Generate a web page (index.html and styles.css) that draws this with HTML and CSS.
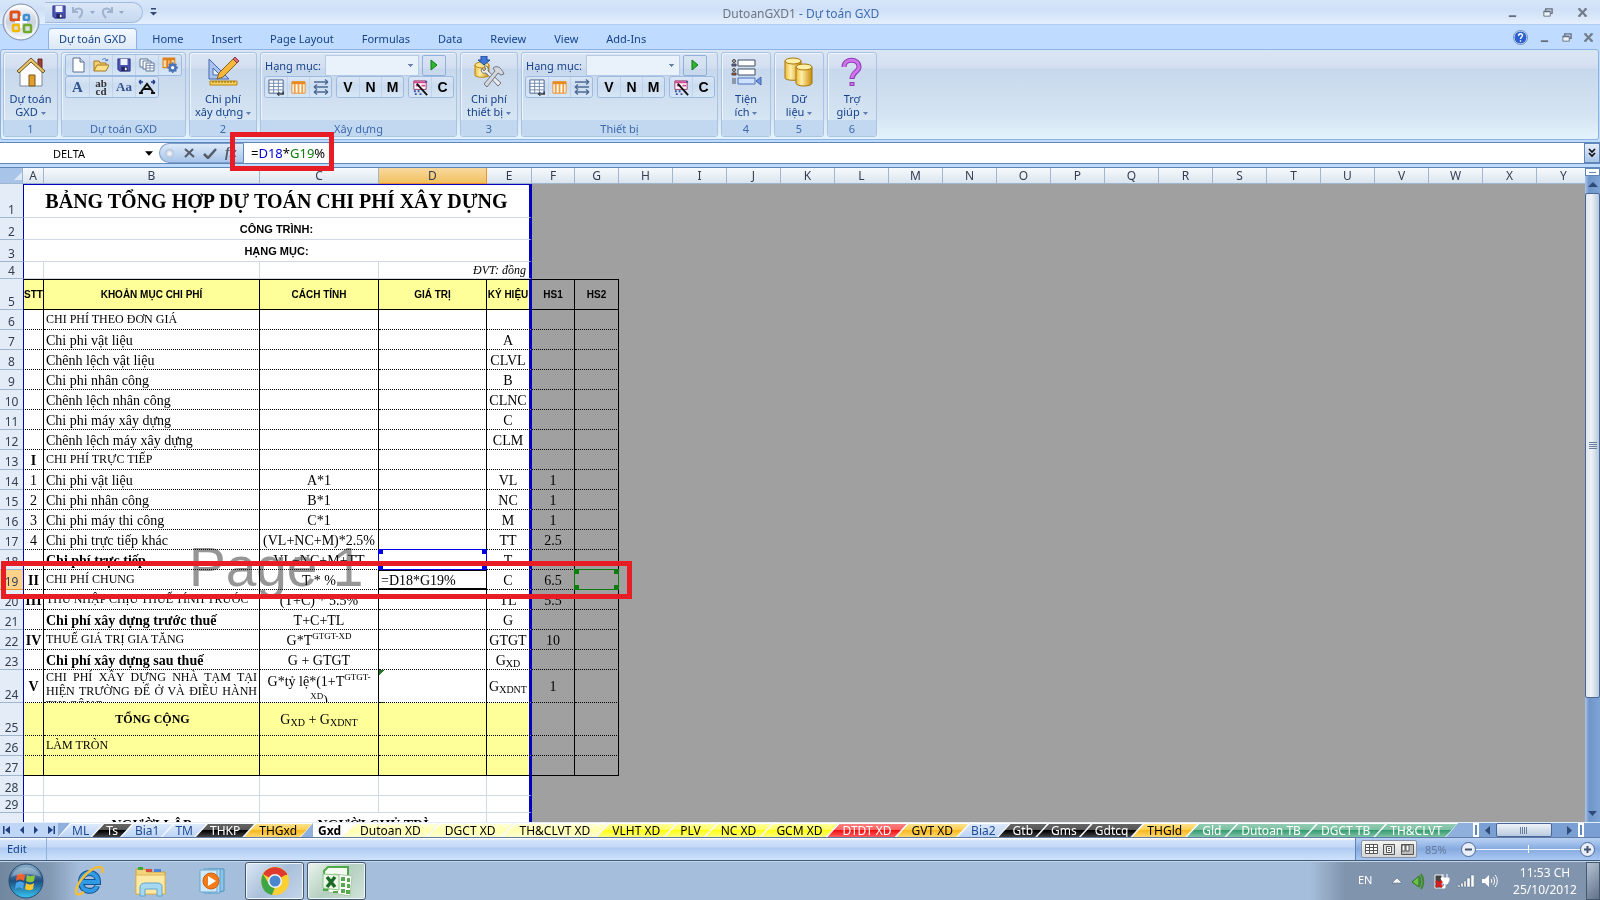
FILE: index.html
```
<!DOCTYPE html>
<html lang="vi">
<head>
    <meta charset="UTF-8">
    <meta name="viewport" content="width=device-width, initial-scale=1.0">
    <title>DutoanGXD1 - Dự toán GXD</title>
    <link rel="stylesheet" href="styles.css">
</head>
<body>
    <svg class="defs" aria-hidden="true">
        <defs>
            <linearGradient id="gold" x1="0" x2="1"><stop offset="0" stop-color="#f0b93a"/><stop offset=".35" stop-color="#fff0a8"/><stop offset="1" stop-color="#c98a08"/></linearGradient>
            <linearGradient id="orb" x1="0" y1="0" x2="0" y2="1"><stop offset="0" stop-color="#8fb4d0"/><stop offset=".5" stop-color="#1f4f80"/><stop offset="1" stop-color="#35c6f4"/></linearGradient>
            <linearGradient id="ball" x1="0" y1="0" x2="0" y2="1"><stop offset="0" stop-color="#ffffff"/><stop offset=".5" stop-color="#c9d2de"/><stop offset="1" stop-color="#f4f8fc"/></linearGradient>
            <symbol id="save" viewBox="0 0 16 16"><path d="M1 1h14v14H3l-2-2z" fill="#4a55b5" stroke="#2a2f80"/><path d="M4 1h8v7H4z" fill="#eef3ff"/><path d="M5 10h7v5H5z" fill="#20245c"/><path d="M9 11h2v3H9z" fill="#fff"/></symbol>
            <symbol id="page" viewBox="0 0 16 16"><path d="M3 1h7l4 4v10H3z" fill="#fff" stroke="#5c6f92"/><path d="M10 1v4h4" fill="#c8d4ea" stroke="#5c6f92"/></symbol>
            <symbol id="open" viewBox="0 0 16 16"><path d="M1 14V4h5l1 2h6v3" fill="#f6d070" stroke="#a8781c"/><path d="M1 14l3-6h12l-3 6z" fill="#fbe08c" stroke="#a8781c"/><path d="M9 3c2-2 4-2 5 1m0 0l-2-1m2 1l1-2" fill="none" stroke="#4a78c0"/></symbol>
            <symbol id="sheets" viewBox="0 0 16 16"><g fill="#fff" stroke="#5f7496"><path d="M1 2h8v8H1z"/><path d="M4 4h8v8H4z"/><path d="M7 6h8v8H7z"/></g><path d="M7 8.500h8M7 11h8M11 7v7" stroke="#7f92b4"/></symbol>
            <symbol id="cfg" viewBox="0 0 16 16"><path d="M1 1h11v9H1z" fill="#fbd9a0" stroke="#e0801c"/><path d="M1 2h11M5 2v8M8 2v8" stroke="#e0801c" stroke-width="2"/><circle cx="10" cy="10" r="3" fill="#fff" stroke="#4a72b8" stroke-width="2"/><path d="M10 5v10M5 10h10M6.500 6.500l7 7M13.500 6.500l-7 7" stroke="#4a72b8" stroke-width="1.500"/><circle cx="10" cy="10" r="1.500" fill="#fff"/></symbol>
            <symbol id="grid" viewBox="0 0 18 18"><path d="M1 1h15v14H1z" fill="#fff" stroke="#44608c"/><path d="M1 4.500h15M1 8h15M1 11.500h15M6 1v14M11 1v14" stroke="#6f88ac"/><path d="M10 16h7M12 14l-2 2 2 2M16 13v3" fill="none" stroke="#111"/></symbol>
            <symbol id="cols" viewBox="0 0 16 16"><path d="M1 2h14v12H1z" fill="#fff" stroke="#e88a20"/><path d="M1 3h14" stroke="#e88a20" stroke-width="3"/><path d="M4 4v10M8 4v10M12 4v10" stroke="#f0a040" stroke-width="2"/></symbol>
            <symbol id="arrows" viewBox="0 0 18 18"><path d="M2 4h14M16 4l-3-2.500M16 4l-3 2.500M2 9h14M2 9l3-2.500M2 9l3 2.500M2 14h14M16 14l-3-2.500M16 14l-3 2.500M2 14l3-2.500M2 14l3 2.500" fill="none" stroke="#4d6a94" stroke-width="1.300"/></symbol>
            <symbol id="wand" viewBox="0 0 18 18"><path d="M2 2h13v9H2z" fill="#fff" stroke="#93376a"/><path d="M2 3.500h13M4 7h4M10 7h4" stroke="#d04a8c" stroke-width="2"/><path d="M5 5l11 12" stroke="#111" stroke-width="2"/><path d="M2 13h2M6 13h2M3 16h2M8 16h2M14 3h2" stroke="#3a4fa8" stroke-width="2"/></symbol>
            <symbol id="play" viewBox="0 0 10 12"><path d="M2 1l6 5-6 5z" fill="#2fb52f" stroke="#117a1d"/></symbol>
            <symbol id="drop" viewBox="0 0 7 4"><path d="M0 0h7L3.500 4z" fill="currentColor"/></symbol>
            <symbol id="min" viewBox="0 0 12 12"><path d="M2 9h8v2H2z" fill="#66707e"/></symbol>
            <symbol id="max" viewBox="0 0 12 12"><path d="M4 4V2h7v5H9" fill="none" stroke="#66707e" stroke-width="1.500"/><path d="M2 4.500h7V10H2z" fill="#eef4fb" stroke="#66707e"/><path d="M2 5h7" stroke="#66707e" stroke-width="1.500"/></symbol>
            <symbol id="close" viewBox="0 0 12 12"><path d="M2 2l8 8M10 2l-8 8" stroke="#727c8b" stroke-width="2.400"/><path d="M1 2h3M8 2h3M1 10h3M8 10h3" stroke="#727c8b"/></symbol>
        </defs>
    </svg>

    <header class="titlebar">
        <div class="quick">
            <button aria-label="Save"><svg width="14" height="14"><use href="#save"/></svg></button>
            <button aria-label="Undo"><svg width="14" height="14" viewBox="0 0 14 14"><path d="M3 6c3-4 9-3 8 2 0 2-1 3-3 5M2 2v5h5" fill="none" stroke="#9fb3cf" stroke-width="2"/></svg></button>
            <svg class="mini" width="5" height="3"><use href="#drop"/></svg>
            <button aria-label="Redo"><svg width="14" height="14" viewBox="0 0 14 14"><path d="M11 6C8 2 2 3 3 8c0 2 1 3 3 5M12 2v5H7" fill="none" stroke="#9fb3cf" stroke-width="2"/></svg></button>
            <svg class="mini" width="5" height="3"><use href="#drop"/></svg>
        </div>
        <button class="customize" aria-label="Customize"><svg width="7" height="8" viewBox="0 0 7 8"><path d="M1 0h5v1.500H1zM0 4h7L3.500 7.500z" fill="#31496e"/></svg></button>
        <div class="title"><span>DutoanGXD1</span> - Dự toán GXD</div>
        <div class="winbtns">
            <button aria-label="Minimize"><svg width="11" height="11"><use href="#min"/></svg></button>
            <button aria-label="Restore"><svg width="11" height="11"><use href="#max"/></svg></button>
            <button aria-label="Close"><svg width="11" height="11"><use href="#close"/></svg></button>
        </div>
    </header>
    <button class="office" aria-label="Office">
        <svg width="38" height="38" viewBox="0 0 38 38">
            <circle cx="19" cy="19" r="18" fill="url(#ball)" stroke="#7a8ba5"/>
            <circle cx="19" cy="19" r="16" fill="none" stroke="#fff" stroke-opacity=".8"/>
            <g fill="none" stroke-width="3">
                <rect x="9" y="9" width="8" height="8" rx="1" stroke="#e0501a"/>
                <rect x="22" y="12" width="5" height="5" rx="1" stroke="#3f8fd6" stroke-width="2.500"/>
                <rect x="11" y="22" width="6" height="6" rx="1" stroke="#f5b800" stroke-width="2.500"/>
                <rect x="22" y="22" width="7" height="7" rx="1" stroke="#6faa2c" stroke-width="2.500"/>
            </g>
            <path d="M19 13v12M13 19h12" stroke="#fff" stroke-width="2"/>
        </svg>
    </button>

    <nav class="tabs">
        <a class="active" href="#">Dự toán GXD</a>
        <a href="#">Home</a>
        <a href="#">Insert</a>
        <a href="#">Page Layout</a>
        <a href="#">Formulas</a>
        <a href="#">Data</a>
        <a href="#">Review</a>
        <a href="#">View</a>
        <a href="#">Add-Ins</a>
        <div class="winbtns small">
            <button aria-label="Help"><svg width="15" height="15" viewBox="0 0 15 15"><circle cx="7.500" cy="7.500" r="6.500" fill="#2c5fd0" stroke="#e8f1ff"/><circle cx="7.500" cy="7.500" r="7" fill="none" stroke="#4468a8" stroke-width=".7"/><path d="M5.500 6c0-3 4-3 4-.5C9.500 7 7.500 7 7.500 9M7.500 10.200v1.600" fill="none" stroke="#fff" stroke-width="1.400"/></svg></button>
            <button aria-label="Minimize window"><svg width="11" height="11"><use href="#min"/></svg></button>
            <button aria-label="Restore window"><svg width="11" height="11"><use href="#max"/></svg></button>
            <button aria-label="Close window"><svg width="11" height="11"><use href="#close"/></svg></button>
        </div>
    </nav>

    <section class="ribbon">
        <div class="group g1">
            <button class="big">
                <svg width="32" height="32" viewBox="0 0 32 32"><path d="M23 3h4v9l-4-4z" fill="#a04038" stroke="#6d2420"/><path d="M5 15L16 5l11 10v15H5z" fill="#fdfdfd" stroke="#7d8798"/><path d="M16 2L2 15l2 2L16 6l12 11 2-2z" fill="#e8c06a" stroke="#6d5728"/><path d="M14 19h6v11h-6z" fill="#e0a030" stroke="#7a5410"/></svg>
                <span>Dự toán<br>GXD <svg width="5" height="3"><use href="#drop"/></svg></span>
            </button>
            <h2>1</h2>
        </div>
        <div class="group g2">
            <div class="tools">
                <div class="btns">
                    <button aria-label="New"><svg width="16" height="16"><use href="#page"/></svg></button>
                    <button aria-label="Open"><svg width="16" height="16"><use href="#open"/></svg></button>
                    <button aria-label="Save file"><svg width="14" height="14"><use href="#save"/></svg></button>
                    <button aria-label="Sheets"><svg width="16" height="16"><use href="#sheets"/></svg></button>
                    <button aria-label="Options"><svg width="17" height="17"><use href="#cfg"/></svg></button>
                </div>
                <div class="btns">
                    <button class="serif">A</button>
                    <button class="abcd">ab<br>cd</button>
                    <button class="aa">Aa</button>
                    <button aria-label="Text width"><svg width="18" height="16" viewBox="0 0 18 16"><path d="M1 14h4M13 14h4M3 13l6-8 6 8M6 10h6" fill="none" stroke="#111" stroke-width="2"/><path d="M1 3h4M1 3l2-2M1 3l2 2M17 3h-4M17 3l-2-2M17 3l-2 2" fill="none" stroke="#1c3f8c" stroke-width="1.500"/></svg></button>
                </div>
            </div>
            <h2>Dự toán GXD</h2>
        </div>
        <div class="group g3">
            <button class="big">
                <svg width="32" height="32" viewBox="0 0 32 32"><path d="M2 3v20h20z" fill="#a9c2ee" stroke="#4466ac"/><path d="M6 12v7h7z" fill="#e6eefb" stroke="#4466ac"/><path d="M10 23L12 17 26 3l4 4-14 14z" fill="#f5b83c" stroke="#8a6218"/><path d="M26 3l2-2 4 4-2 2z" fill="#e06a70" stroke="#8a4050"/><path d="M3 25h27v4H3z" fill="#f9d35a" stroke="#b88410"/><path d="M6 25v2M9 25v2M12 25v2M15 25v2M18 25v2M21 25v2M24 25v2M27 25v2" stroke="#8a6218"/></svg>
                <span>Chi phí<br>xây dựng <svg width="5" height="3"><use href="#drop"/></svg></span>
            </button>
            <h2>2</h2>
        </div>
        <div class="group g4">
            <div class="tools">
                <div class="pick">
                    <label for="hm1">Hạng mục:</label>
                    <select id="hm1"><option></option></select>
                    <button class="run" aria-label="Run"><svg width="10" height="12"><use href="#play"/></svg></button>
                </div>
                <div class="sets">
                    <div class="btns">
                        <button aria-label="Table"><svg width="17" height="17"><use href="#grid"/></svg></button>
                        <button aria-label="Columns"><svg width="15" height="15"><use href="#cols"/></svg></button>
                        <button aria-label="Swap"><svg width="18" height="18"><use href="#arrows"/></svg></button>
                    </div>
                    <div class="btns"><button class="letter">V</button><button class="letter">N</button><button class="letter">M</button></div>
                    <div class="btns"><button aria-label="Wizard"><svg width="17" height="17"><use href="#wand"/></svg></button><button class="letter">C</button></div>
                </div>
            </div>
            <h2>Xây dựng</h2>
        </div>
        <div class="group g5">
            <button class="big">
                <svg width="32" height="32" viewBox="0 0 32 32"><path d="M2 9v10c0 3 14 3 14 0V9z" fill="url(#gold)" stroke="#b8860b"/><ellipse cx="9" cy="9" rx="7" ry="3" fill="#fbe48c" stroke="#b8860b"/><path d="M8 0h6v4h3l-6 5-6-5h3z" fill="#3f78d8" stroke="#1f4a9c"/><path d="M9 12c-2 3 0 6 4 5l12 13 3-3-13-12c1-4-2-6-4-5l2 3-2 2z" fill="#e8eaee" stroke="#70757e"/><path d="M11 28l11-13-2-3c4-3 8-1 11 6l-3 1-3-2L14 31z" fill="#d4d8de" stroke="#70757e"/></svg>
                <span>Chi phí<br>thiết bị <svg width="5" height="3"><use href="#drop"/></svg></span>
            </button>
            <h2>3</h2>
        </div>
        <div class="group g6">
            <div class="tools">
                <div class="pick">
                    <label for="hm2">Hạng mục:</label>
                    <select id="hm2"><option></option></select>
                    <button class="run" aria-label="Run"><svg width="10" height="12"><use href="#play"/></svg></button>
                </div>
                <div class="sets">
                    <div class="btns">
                        <button aria-label="Table"><svg width="17" height="17"><use href="#grid"/></svg></button>
                        <button aria-label="Columns"><svg width="15" height="15"><use href="#cols"/></svg></button>
                        <button aria-label="Swap"><svg width="18" height="18"><use href="#arrows"/></svg></button>
                    </div>
                    <div class="btns"><button class="letter">V</button><button class="letter">N</button><button class="letter">M</button></div>
                    <div class="btns"><button aria-label="Wizard"><svg width="17" height="17"><use href="#wand"/></svg></button><button class="letter">C</button></div>
                </div>
            </div>
            <h2>Thiết bị</h2>
        </div>
        <div class="group g7">
            <button class="big">
                <svg width="32" height="32" viewBox="0 0 32 32"><g fill="#fff" stroke="#3c4c66"><path d="M8 4h17v6H8zM8 13h17v6H8z"/><path d="M8 22h17v6H8z" fill="#cfe0ff" stroke="#4a72c0"/></g><g stroke="#444"><circle cx="4" cy="5" r="1.500" fill="#bbb"/><path d="M2 8h4v2H2z" fill="#5570c0"/><circle cx="4" cy="14" r="1.500" fill="#bbb"/><path d="M2 17h4v2H2z" fill="#d05020"/></g><path d="M2 22h4v6H2z" fill="#8a96ac"/><path d="M31 21v8l-5-4z" fill="#6f97e0" stroke="#3f62b0"/></svg>
                <span>Tiện<br>ích <svg width="5" height="3"><use href="#drop"/></svg></span>
            </button>
            <h2>4</h2>
        </div>
        <div class="group g7">
            <button class="big">
                <svg width="32" height="32" viewBox="0 0 32 32"><g stroke="#a8740c"><path d="M2 5v17c0 3 16 3 16 0V5z" fill="url(#gold)"/><ellipse cx="10" cy="5" rx="8" ry="3" fill="#fff0a8"/><path d="M13 11v16c0 4 16 4 16 0V11z" fill="url(#gold)"/><ellipse cx="21" cy="11" rx="8" ry="3" fill="#fff0a8"/></g></svg>
                <span>Dữ<br>liệu <svg width="5" height="3"><use href="#drop"/></svg></span>
            </button>
            <h2>5</h2>
        </div>
        <div class="group g7">
            <button class="big">
                <svg width="32" height="32" viewBox="0 0 32 32"><g fill="none"><path d="M8 11c0-9 15-9 15 0 0 5-7 5-7 12M16 26v4" stroke="#8f3fb0" stroke-width="5"/><path d="M8 11c0-9 15-9 15 0 0 5-7 5-7 11M16 27v2" stroke="#cf74ee" stroke-width="3"/></g></svg>
                <span>Trợ<br>giúp <svg width="5" height="3"><use href="#drop"/></svg></span>
            </button>
            <h2>6</h2>
        </div>
    </section>

    <section class="formula">
        <input class="name" aria-label="Name box" value="DELTA">
        <button class="namedrop" aria-label="Names"><svg width="8" height="5"><use href="#drop"/></svg></button>
        <div class="capsule">
            <i></i>
            <button aria-label="Cancel"><svg width="11" height="10" viewBox="0 0 11 10"><path d="M1 1l9 8M9 1L1 9" stroke="#555b66" stroke-width="2"/></svg></button>
            <button aria-label="Enter"><svg width="14" height="11" viewBox="0 0 14 11"><path d="M1 6l4 4 8-9" fill="none" stroke="#555b66" stroke-width="2.500"/></svg></button>
            <button class="fx">fx</button>
        </div>
        <div class="entry" contenteditable="true" role="textbox" aria-label="Formula" spellcheck="false">=<span class="blue">D18</span>*<span class="green">G19</span>%</div>
        <button class="expand" aria-label="Expand"><svg width="8" height="10" viewBox="0 0 8 10"><path d="M1 1l3 3 3-3M1 5l3 3 3-3" fill="none" stroke="#111" stroke-width="1.700"/></svg></button>
    </section>

    <main class="work">
        <div class="sheet">
            <table>
                <colgroup>
                    <col class="c0"><col class="ca"><col class="cb"><col class="cc"><col class="cd"><col class="ce"><col class="cf"><col class="cg"><col class="cx" span="18">
                </colgroup>
                <thead>
                    <tr>
                        <th class="corner"><svg width="8" height="8" viewBox="0 0 8 8"><path d="M8 0v8H0z" fill="#dbe8f8"/></svg></th>
                        <th>A</th><th>B</th><th>C</th><th class="hot">D</th><th>E</th><th>F</th><th>G</th><th>H</th><th>I</th><th>J</th><th>K</th><th>L</th><th>M</th><th>N</th><th>O</th><th>P</th><th>Q</th><th>R</th><th>S</th><th>T</th><th>U</th><th>V</th><th>W</th><th>X</th><th>Y</th>
                    </tr>
                </thead>
                <tbody class="top">
                    <tr class="r1"><th>1</th><td colspan="5" class="e heading">BẢNG TỔNG HỢP DỰ TOÁN CHI PHÍ XÂY DỰNG</td></tr>
                    <tr class="r2"><th>2</th><td colspan="5" class="e sub">CÔNG TRÌNH:</td></tr>
                    <tr class="r2"><th>3</th><td colspan="5" class="e sub">HẠNG MỤC:</td></tr>
                    <tr class="r4"><th>4</th><td></td><td></td><td></td><td colspan="2" class="e unit">ĐVT: đồng</td></tr>
                </tbody>
                <tbody class="data">
                    <tr class="heads"><th>5</th><td>STT</td><td>KHOẢN MỤC CHI PHÍ</td><td>CÁCH TÍNH</td><td>GIÁ TRỊ</td><td class="e">KÝ HIỆU</td><td>HS1</td><td>HS2</td></tr>
                    <tr><th>6</th><td></td><td class="caps">CHI PHÍ THEO ĐƠN GIÁ</td><td></td><td></td><td></td><td></td><td></td></tr>
                    <tr><th>7</th><td></td><td>Chi phi vật liệu</td><td></td><td></td><td>A</td><td></td><td></td></tr>
                    <tr><th>8</th><td></td><td>Chênh lệch vật liệu</td><td></td><td></td><td>CLVL</td><td></td><td></td></tr>
                    <tr><th>9</th><td></td><td>Chi phi nhân công</td><td></td><td></td><td>B</td><td></td><td></td></tr>
                    <tr><th>10</th><td></td><td>Chênh lệch nhân công</td><td></td><td></td><td>CLNC</td><td></td><td></td></tr>
                    <tr><th>11</th><td></td><td>Chi phi máy xây dựng</td><td></td><td></td><td>C</td><td></td><td></td></tr>
                    <tr><th>12</th><td></td><td>Chênh lệch máy xây dựng</td><td></td><td></td><td>CLM</td><td></td><td></td></tr>
                    <tr><th>13</th><td class="b">I</td><td class="caps">CHI PHÍ TRỰC TIẾP</td><td></td><td></td><td></td><td></td><td></td></tr>
                    <tr><th>14</th><td>1</td><td>Chi phi vật liệu</td><td>A*1</td><td></td><td>VL</td><td>1</td><td></td></tr>
                    <tr><th>15</th><td>2</td><td>Chi phi nhân công</td><td>B*1</td><td></td><td>NC</td><td>1</td><td></td></tr>
                    <tr><th>16</th><td>3</td><td>Chi phi máy thi công</td><td>C*1</td><td></td><td>M</td><td>1</td><td></td></tr>
                    <tr><th>17</th><td>4</td><td>Chi phi trực tiếp khác</td><td>(VL+NC+M)*2.5%</td><td></td><td>TT</td><td>2.5</td><td></td></tr>
                    <tr><th>18</th><td></td><td class="b">Chi phí trực tiếp</td><td>VL+NC+M+TT</td><td class="ref"><i></i></td><td>T</td><td></td><td></td></tr>
                    <tr><th class="hot">19</th><td class="b">II</td><td class="caps">CHI PHÍ CHUNG</td><td>T * %</td><td class="editing">=D18*G19%</td><td>C</td><td>6.5</td><td class="ref greenref"><i></i></td></tr>
                    <tr><th>20</th><td class="b">III</td><td class="caps">THU NHẬP CHỊU THUẾ TÍNH TRƯỚC</td><td>(T+C) * 5.5%</td><td></td><td>TL</td><td>5.5</td><td></td></tr>
                    <tr><th>21</th><td></td><td class="b">Chi phí xây dựng trước thuế</td><td>T+C+TL</td><td></td><td>G</td><td></td><td></td></tr>
                    <tr><th>22</th><td class="b">IV</td><td class="caps">THUẾ GIÁ TRỊ GIA TĂNG</td><td>G*T<sup>GTGT-XD</sup></td><td></td><td>GTGT</td><td>10</td><td></td></tr>
                    <tr><th>23</th><td></td><td class="b">Chi phí xây dựng sau thuế</td><td>G + GTGT</td><td></td><td>G<sub>XD</sub></td><td></td><td></td></tr>
                    <tr class="tall"><th>24</th><td class="b">V</td><td class="long"><div>CHI PHÍ XÂY DỰNG NHÀ TẠM TẠI HIỆN TRƯỜNG ĐỂ Ở VÀ ĐIỀU HÀNH THI CÔNG</div></td><td class="wrap"><div>G*tỷ lệ*(1+T<sup>GTGT-XD</sup>)</div></td><td class="flag"></td><td>G<sub>XDNT</sub></td><td>1</td><td></td></tr>
                    <tr class="tall sum"><th>25</th><td></td><td class="b mid">TỔNG CỘNG</td><td>G<sub>XD</sub> + G<sub>XDNT</sub></td><td></td><td></td><td></td><td></td></tr>
                    <tr class="sum"><th>26</th><td></td><td class="caps">LÀM TRÒN</td><td></td><td></td><td></td><td></td><td></td></tr>
                    <tr class="sum last"><th>27</th><td></td><td></td><td></td><td></td><td></td><td></td><td></td></tr>
                </tbody>
                <tbody class="top">
                    <tr class="r28"><th>28</th><td></td><td></td><td></td><td></td><td class="e"></td></tr>
                    <tr class="r4"><th>29</th><td></td><td></td><td></td><td></td><td class="e"></td></tr>
                    <tr class="sign"><th></th><td></td><td>NGƯỜI LẬP</td><td colspan="2">NGƯỜI CHỦ TRÌ</td><td class="e"></td></tr>
                </tbody>
            </table>
            <div class="watermark">Page 1</div>
        </div>
        <div class="vscroll">
            <span class="split"></span>
            <button aria-label="Scroll up"><svg width="10" height="5" viewBox="0 0 10 5"><path d="M0 5h10L5 0z" fill="#2f4a78"/></svg></button>
            <div class="thumb"></div>
            <button class="down" aria-label="Scroll down"><svg width="9" height="5"><use href="#drop"/></svg></button>
        </div>
    </main>

    <footer class="sheetbar">
        <div class="nav">
            <button aria-label="First"><svg width="8" height="8" viewBox="0 0 8 8"><path d="M0 0h1.500v8H0zM7 0v8L2 4z" fill="#1f3f80"/></svg></button>
            <button aria-label="Previous"><svg width="8" height="8" viewBox="0 0 8 8"><path d="M6 0v8L2 4z" fill="#1f3f80"/></svg></button>
            <button aria-label="Next"><svg width="8" height="8" viewBox="0 0 8 8"><path d="M2 0v8l4-4z" fill="#1f3f80"/></svg></button>
            <button aria-label="Last"><svg width="8" height="8" viewBox="0 0 8 8"><path d="M6.500 0H8v8H6.500zM1 0v8l5-4z" fill="#1f3f80"/></svg></button>
        </div>
        <div class="sheets">
            <a class="plain" href="#"><span>ML</span></a>
            <a class="black" href="#"><span>Ts</span></a>
            <a class="plain" href="#"><span>Bia1</span></a>
            <a class="plain" href="#"><span>TM</span></a>
            <a class="black" href="#"><span>THKP</span></a>
            <a class="orange" href="#"><span>THGxd</span></a>
            <a class="current" href="#"><span>Gxd</span></a>
            <a class="cream" href="#"><span>Dutoan XD</span></a>
            <a class="cream" href="#"><span>DGCT XD</span></a>
            <a class="cream" href="#"><span>TH&amp;CLVT XD</span></a>
            <a class="yellow" href="#"><span>VLHT XD</span></a>
            <a class="yellow" href="#"><span>PLV</span></a>
            <a class="yellow" href="#"><span>NC XD</span></a>
            <a class="yellow" href="#"><span>GCM XD</span></a>
            <a class="red" href="#"><span>DTDT XD</span></a>
            <a class="orange" href="#"><span>GVT XD</span></a>
            <a class="plain" href="#"><span>Bia2</span></a>
            <a class="black" href="#"><span>Gtb</span></a>
            <a class="black" href="#"><span>Gms</span></a>
            <a class="black" href="#"><span>Gdtcq</span></a>
            <a class="orange" href="#"><span>THGld</span></a>
            <a class="teal" href="#"><span>Gld</span></a>
            <a class="teal" href="#"><span>Dutoan TB</span></a>
            <a class="teal" href="#"><span>DGCT TB</span></a>
            <a class="teal" href="#"><span>TH&amp;CLVT</span></a>
        </div>
        <div class="hscroll">
            <span class="grip"></span>
            <button aria-label="Scroll left"><svg width="5" height="9" viewBox="0 0 5 9"><path d="M5 0v9L0 4.500z" fill="#2f4a78"/></svg></button>
            <div class="thumb"></div>
            <button aria-label="Scroll right"><svg width="5" height="9" viewBox="0 0 5 9"><path d="M0 0v9l5-4.500z" fill="#2f4a78"/></svg></button>
            <span class="grip"></span>
        </div>
    </footer>

    <div class="status">
        <span class="mode">Edit</span>
        <div class="zoom">
            <div class="views">
                <button aria-label="Normal"><svg width="13" height="10" viewBox="0 0 13 10"><path d="M.5.5h12v9H.5zM.5 3.500h12M.5 6.500h12M4.500.5v9M8.500.5v9" fill="#fff" stroke="#555"/></svg></button>
                <button aria-label="Page layout"><svg width="12" height="11" viewBox="0 0 12 11"><path d="M.5.5h11v10H.5z" fill="#ddd" stroke="#555"/><path d="M3.500 2.500h5v6h-5z" fill="#fff" stroke="#555"/><path d="M5 4.500h2M5 6.500h2" stroke="#555"/></svg></button>
                <button aria-label="Page break"><svg width="13" height="11" viewBox="0 0 13 11"><path d="M.5.5h12v10H.5z" fill="#bbb" stroke="#555"/><path d="M1 1h3v6H1zM5 1h3v6H5z" fill="#fff" stroke="#555"/></svg></button>
            </div>
            <span class="pct">85%</span>
            <button class="round" aria-label="Zoom out"><svg width="15" height="15" viewBox="0 0 15 15"><circle cx="7.500" cy="7.500" r="7" fill="#e8effa" stroke="#4c6796"/><path d="M4 7.500h7" stroke="#44546e" stroke-width="2"/></svg></button>
            <span class="track"></span>
            <button class="round" aria-label="Zoom in"><svg width="15" height="15" viewBox="0 0 15 15"><circle cx="7.500" cy="7.500" r="7" fill="#e8effa" stroke="#4c6796"/><path d="M4 7.500h7M7.500 4v7" stroke="#44546e" stroke-width="2"/></svg></button>
        </div>
    </div>

    <div class="taskbar">
        <button class="start" aria-label="Start">
            <svg width="36" height="36" viewBox="0 0 36 36"><circle cx="18" cy="18" r="17" fill="url(#orb)" stroke="#2a4a6c"/><path d="M9 12c3-2 5-2 8 0l-1 6c-3-2-5-2-8 0z" fill="#f0602a"/><path d="M19 12c3 2 6 1 8 0l-1 6c-3 2-6 1-8 0z" fill="#8cc63c"/><path d="M8 20c3-2 5-2 8 0l-1 6c-3-2-5-2-8 0z" fill="#4aa4ea"/><path d="M18 20c3 2 5 2 8 0l-1 6c-3 2-6 1-8 0z" fill="#fcc82c"/><path d="M3 14C8 1 28 1 33 14c-8-4-22-4-30 0z" fill="#fff" opacity=".28"/></svg>
        </button>
        <button class="app" aria-label="Internet Explorer">
            <svg width="32" height="32" viewBox="0 0 32 32"><path d="M8 17h17c0-12-17-12-17 0 0 11 14 11 16 4" fill="none" stroke="#16508f" stroke-width="6"/><path d="M8 17h17c0-12-17-12-17 0 0 11 14 11 16 4" fill="none" stroke="#2f9be6" stroke-width="4"/><path d="M29 8c2-6-2-8-9-4C11 9 4 19 3 26c0 5 4 4 8 1" fill="none" stroke="#f2bd3a" stroke-width="2.500"/></svg>
        </button>
        <button class="app" aria-label="Explorer">
            <svg width="34" height="32" viewBox="0 0 34 32"><path d="M2 4h9l2 3h18v22H2z" fill="#f2d47c" stroke="#c8a040"/><path d="M4 2h5v3H4z" fill="#3aa83a"/><path d="M12 4h6v3h-6z" fill="#d84a3a"/><path d="M20 4h7v3h-7z" fill="#4a86d8"/><path d="M2 10h29v19H2z" fill="#fbe9a4" stroke="#dcb654"/><path d="M6 31v-9c0-3 3-4 5-4h12c3 0 5 1 5 4v9h-5v-7H11v7z" fill="#a6d8f2" stroke="#5fa6d0"/></svg>
        </button>
        <button class="app" aria-label="Media Player">
            <svg width="30" height="30" viewBox="0 0 30 30"><path d="M10 3h16v22l-16 2z" fill="#8cc4e8" stroke="#4f92c0"/><path d="M6 3h16v24H6z" fill="#b4dcf4" stroke="#5c9cc8"/><path d="M2 4h17v22H2z" fill="#cfe9f9" stroke="#6aa8d0"/><circle cx="13" cy="15" r="8" fill="#f27c1c" stroke="#d0600c"/><path d="M10 10v10l8-5z" fill="#fff"/></svg>
        </button>
        <button class="app open" aria-label="Chrome">
            <svg width="30" height="30" viewBox="0 0 30 30"><circle cx="15" cy="15" r="14" fill="#fbd034"/><path d="M15 15L3 8C8-1 22-1 27 8z" fill="#e0392e"/><path d="M3 8l6 10 6 3-3 8C2 27-1 16 3 8z" fill="#3fa648"/><path d="M15 8h12" stroke="#e0392e" stroke-width="2"/><circle cx="15" cy="15" r="7" fill="#f4f4f4"/><circle cx="15" cy="15" r="5.500" fill="#4a86d0"/></svg>
        </button>
        <button class="app open excel" aria-label="Excel">
            <svg width="34" height="32" viewBox="0 0 34 32"><path d="M8 2h20v23H4V6z" fill="#f4fbf0" stroke="#4fa84a" stroke-width="2"/><path d="M14 9l18 2-2 20-22-4z" fill="#fff" stroke="#a8c8a4"/><path d="M3 9l16 1v15L3 23z" fill="#eef8ea" stroke="#8cc484"/><path d="M21 12h4v4h-4zM27 13h3v4h-3zM21 18h4v4h-4zM27 19h3v4h-3zM13 26h5v2h-5zM21 24h4v4h-4zM26 25h4v4h-4z" fill="#58a850"/><path d="M7 12l8 10M15 12L7 22" stroke="#1c6a28" stroke-width="3.500"/></svg>
        </button>
        <div class="tray">
            <span class="lang">EN</span>
            <svg width="10" height="6" viewBox="0 0 10 6"><path d="M0 5l5-5 5 5z" fill="#fff" stroke="#44566e" stroke-width=".5"/></svg>
            <svg width="16" height="17" viewBox="0 0 16 17"><path d="M2 9l7-6v11z" fill="#6cc04c" stroke="#2c6e1c"/><path d="M9 3c2 3 2 8 0 11M11 1c3 5 3 11 0 15" fill="none" stroke="#3c8a28" stroke-width="2"/></svg>
            <svg width="16" height="16" viewBox="0 0 16 16"><path d="M1 2h7v13H1z" fill="#444" stroke="#eee"/><path d="M9 1v4M13 1v4M7 5h8v3l-2 3h-3l-2-3zM11 11v4H8" fill="#fff" stroke="#fff"/><path d="M2 8l6 6M8 8l-6 6" stroke="#e01a1a" stroke-width="2.500"/></svg>
            <svg width="16" height="14" viewBox="0 0 16 14"><path d="M0 11h2v2H0zM3 9h2v4H3zM6 7h2v6H6zM9 4h3v9H9zM13 1h3v12h-3z" fill="#fff" stroke="#4a5a70" stroke-width=".4"/></svg>
            <svg width="16" height="14" viewBox="0 0 16 14"><path d="M0 5v4h3l4 4V1L3 5z" fill="#fff"/><path d="M9 5c1 1 1 3 0 4M11 3c2 2 2 6 0 8M13 1c3 3 3 9 0 12" fill="none" stroke="#fff"/></svg>
            <div class="clock">11:53 CH<br>25/10/2012</div>
        </div>
        <button class="desktop" aria-label="Show desktop"></button>
    </div>

    <div class="mark mark-formula"></div>
    <div class="mark mark-row"></div>
</body>
</html>
```
FILE: styles.css
```
* {
    box-sizing: border-box;
}

html, body {
    height: 100%;
    margin: 0;
}

body {
    display: flex;
    flex-direction: column;
    position: relative;
    overflow: hidden;
    background-color: #bfdbff;
    font-family: "Noto Sans", "Open Sans", sans-serif;
    font-size: 11px;
    color: #15428b;
}

button {
    display: flex;
    align-items: center;
    justify-content: center;
    padding: 0;
    border: none;
    background: none;
    font: inherit;
    color: inherit;
}

a {
    color: inherit;
    text-decoration: none;
}

.defs {
    position: absolute;
    width: 0;
    height: 0;
}

/* title bar */
.titlebar {
    display: flex;
    align-items: center;
    height: 25px;
    padding-left: 45px;
    background: linear-gradient(#d8e6f9, #cfe0f7 40%, #e4effc);
    border-bottom: 1px solid #b0cdf0;
}

.quick {
    display: flex;
    align-items: center;
    gap: 5px;
    width: 98px;
    height: 21px;
    padding-left: 7px;
    background: linear-gradient(#dbe7f7, #c6d8f0);
    border: 1px solid #9fbce0;
    border-left: none;
    border-radius: 0 11px 11px 0;
}

.mini {
    color: #94a8c6;
}

.customize {
    width: 20px;
}

.title {
    flex: 1;
    padding: 2px 68px 0 0;
    text-align: center;
    color: #3f6db5;
    font-size: 12px;
}

.title span {
    color: #6e7480;
}

.winbtns {
    display: flex;
    gap: 24px;
    padding-right: 12px;
}

.winbtns.small {
    gap: 11px;
    margin-left: auto;
    padding: 0 6px 0 0;
}

.office {
    position: absolute;
    left: 2px;
    top: 3px;
    z-index: 3;
}

/* ribbon */
.tabs {
    display: flex;
    align-items: center;
    height: 24px;
    padding-left: 48px;
}

.tabs a {
    height: 24px;
    padding: 0 14px;
    line-height: 28px;
}

.tabs a.active {
    height: 22px;
    margin: 3px 1px 0 0;
    padding: 0 10px;
    line-height: 20px;
    background: linear-gradient(#f4f9ff, #dce8f6);
    border: 1px solid #8db2e3;
    border-bottom: none;
    border-radius: 4px 4px 0 0;
}

.ribbon {
    display: flex;
    gap: 3px;
    height: 91px;
    margin-right: 1px;
    padding: 2px;
    background: linear-gradient(#dbe6f4 0, #d3dff0 18px, #c7d8ed 19px, #d5e4f2 66px, #e3f3fd 100%);
    border: 1px solid #8db2e3;
    border-radius: 3px;
}

.group {
    display: flex;
    flex-direction: column;
    justify-content: space-between;
    border: 1px solid #a9c3e0;
    border-radius: 3px;
    box-shadow: inset 1px 1px 0 #edf4fc;
}

.group h2 {
    margin: 0;
    height: 16px;
    background-color: #c1d8f0;
    border-radius: 0 0 3px 3px;
    font-size: 11px;
    font-weight: normal;
    line-height: 17px;
    text-align: center;
    color: #3e6aaa;
}

.g1 { width: 55px; }
.g2 { width: 125px; }
.g3 { width: 68px; }
.g4, .g6 { width: 197px; }
.g5 { width: 58px; }
.g7 { width: 50px; }

.big {
    flex-direction: column;
    gap: 4px;
    padding-top: 3px;
    line-height: 13px;
    white-space: nowrap;
}

.big span svg {
    vertical-align: middle;
    color: #5f7cae;
}

.tools {
    padding: 1px 3px;
}

.btns {
    display: flex;
    width: fit-content;
    height: 22px;
    border: 1px solid #9dbbe0;
    border-radius: 3px;
    background: linear-gradient(#dae6f5, #cbdcf0 45%, #d8e7f6);
}

.btns button {
    width: 23px;
}

.btns button + button {
    border-left: 1px solid #c0d3ea;
}

.serif {
    font: bold 15px "Liberation Serif", serif;
    color: #33548f;
}

.btns .abcd {
    font: bold 11px/8px "Liberation Serif", serif;
    color: #333;
}

.aa {
    font: bold 13px "Liberation Serif", serif;
    color: #33548f;
}

.pick {
    display: flex;
    align-items: center;
    height: 22px;
}

.pick label {
    flex: 1;
    padding-left: 1px;
    white-space: nowrap;
}

.pick select {
    width: 94px;
    height: 21px;
    border: 1px solid #b4cae6;
    background: conic-gradient(from -45deg at 50% 100%, #6a83ab 90deg, transparent 0) no-repeat right 5px center / 6px 3px #e9f1fb;
    appearance: none;
}

.run {
    width: 24px;
    height: 21px;
    margin: 0 7px 0 3px;
    border: 1px solid #8fb0dc;
    border-radius: 2px;
}

.sets {
    display: flex;
    gap: 4px;
}

.g4 .btns button, .g6 .btns button {
    width: 22px;
}

.btns .letter {
    font: bold 14px "Liberation Sans", sans-serif;
    color: #000;
}

/* formula bar */
.formula {
    display: flex;
    height: 22px;
    margin: 2px 0 3px;
    background-color: #fff;
    border-top: 1px solid #5f86b8;
    border-bottom: 1px solid #5f86b8;
    color: #000;
}

.name {
    width: 138px;
    padding: 0;
    border: none;
    background: none;
    font: 11px "Noto Sans", sans-serif;
    text-align: center;
}

.namedrop {
    width: 21px;
    color: #000;
}

.capsule {
    display: flex;
    align-items: center;
    gap: 8px;
    width: 85px;
    padding-left: 5px;
    background: linear-gradient(#dce9f8, #a9c5ea);
    border: 1px solid #7d9fcc;
    border-right: 1px solid #5f86b8;
    border-radius: 11px 0 0 11px;
}

.capsule i {
    width: 9px;
    height: 9px;
    margin-right: 2px;
    border-radius: 50%;
    background: radial-gradient(#fff, #8ea8cc);
}

.fx {
    font: italic bold 14px "Liberation Serif", serif;
    color: #555b66;
}

.entry {
    flex: 1;
    padding-left: 7px;
    font-size: 13px;
    line-height: 20px;
}

.blue { color: #0000d8; }
.green { color: #0a7d0a; }

.expand {
    width: 16px;
    border: 1px solid #5f86b8;
    background: linear-gradient(#e4eefa, #a9c4e8);
}

/* worksheet */
.work {
    display: flex;
    flex: 1;
    min-height: 0;
    border-top: 1px solid #5f86b8;
}

.sheet {
    flex: 1;
    position: relative;
    overflow: hidden;
    background-color: #a0a0a0;
}

.sheet table {
    table-layout: fixed;
    width: 1591px;
    border-spacing: 0;
    color: #000;
    font-family: "Liberation Serif", serif;
    font-size: 14px;
}

.c0 { width: 23px; }
.ca { width: 21px; }
.cb { width: 216px; }
.cc { width: 119px; }
.cd { width: 108px; }
.ce { width: 45px; }
.cf { width: 43px; }
.cg { width: 44px; }
.cx { width: 54px; }

.sheet th {
    padding: 0;
    font: 12px/15px "Noto Sans", sans-serif;
    color: #333f50;
}

thead th {
    height: 16px;
    background: linear-gradient(#f7fafd, #dbe4ee);
    border-right: 1px solid #9eb6ce;
    border-bottom: 1px solid #9eb6ce;
}

thead th.corner {
    background-color: #a9c4e9;
    background-image: none;
    text-align: right;
}

thead th.hot {
    background: linear-gradient(#f9d99f, #f1c15f);
    border-color: #e8952f;
}

tbody th {
    background-color: #e4ecf7;
    border-bottom: 1px solid #9eb6ce;
    vertical-align: bottom;
}

tbody th.hot {
    background-color: #fdd38c;
    border-color: #e8952f;
}

td {
    padding: 2px 0 0;
    height: 20px;
    line-height: 17px;
    background-color: #fff;
    text-align: center;
    white-space: nowrap;
}

td:nth-child(2) {
    border-left: 1px solid #0000c0;
}

.top td {
    border-right: 1px solid #d0d7e5;
    border-bottom: 1px solid #d0d7e5;
}

.r1 td { height: 34px; border-top: 1px solid #0000c0; }
.r2 td { height: 22px; }
.r4 td { height: 17px; padding-top: 0; line-height: 16px; }
.sheet .r4 th { line-height: 14px; }

.top .heading {
    padding-top: 0;
    font-size: 20px;
    font-weight: bold;
}

.top .sub {
    padding-top: 0;
    font: bold 11px "Liberation Sans", sans-serif;
}

.unit {
    padding-right: 3px;
    font-size: 12px;
    font-style: italic;
    text-align: right;
}

.data td {
    border-right: 1px solid #000;
    border-bottom: 1px dotted #000;
}

.data td:nth-child(3) {
    padding-left: 2px;
    text-align: left;
}

.data td:nth-child(n+7) {
    background-color: #a0a0a0;
}

.top td.e, .data td:nth-child(6) {
    border-right: 3px solid #0000c0;
}

.data .heads td {
    height: 31px;
    padding: 0;
    background-color: #ffff99;
    border-top: 1px solid #000;
    border-bottom: 1px solid #000;
    font: bold 10px "Liberation Sans", sans-serif;
    text-align: center;
}

.data .heads td:nth-child(n+7) {
    background-color: #a0a0a0;
}

.data .sum td:nth-child(-n+6) {
    background-color: #ffff99;
}

.data .last td {
    border-bottom: 1px solid #000;
}

.data .caps {
    padding-top: 0;
    font-size: 12px;
}

.b {
    font-weight: bold;
}

.data .tall td {
    height: 33px;
    padding-top: 0;
}

.data .tall td.mid {
    font-size: 12px;
    text-align: center;
}

.long div {
    height: 32px;
    padding-right: 2px;
    overflow: hidden;
    font-size: 12px;
    line-height: 14px;
    text-align: justify;
    white-space: normal;
}

.wrap div {
    height: 32px;
    padding-top: 2px;
    overflow: hidden;
    line-height: 19px;
    white-space: normal;
}

sup, sub {
    line-height: 0;
}

sup {
    font-size: 9px;
}

sub {
    font-size: 10px;
    vertical-align: -2px;
}

.flag {
    background-image: linear-gradient(135deg, #1f7a1f 4px, transparent 4px);
}

.ref, .editing {
    position: relative;
}

/* coloured range frame with a handle in each corner */
.ref i {
    position: absolute;
    inset: -1px;
    z-index: 1;
    color: #0000e0;
    border: 1px solid currentColor;
    background:
        linear-gradient(currentColor, currentColor) 0 0 / 4px 4px,
        linear-gradient(currentColor, currentColor) 100% 0 / 4px 4px,
        linear-gradient(currentColor, currentColor) 0 100% / 4px 4px,
        linear-gradient(currentColor, currentColor) 100% 100% / 4px 4px;
    background-repeat: no-repeat;
}

.greenref i {
    color: #0a7d0a;
}

.data td.editing {
    padding: 3px 0 0 2px;
    border-bottom: 2px solid #000;
    box-shadow: inset 0 1px 0 #000;
    line-height: 15px;
    text-align: left;
}

.sign td {
    padding-top: 4px;
    font-weight: bold;
}

.watermark {
    position: absolute;
    left: 189px;
    top: 369px;
    color: #969696;
    font: 55px/60px "Liberation Sans", sans-serif;
    mix-blend-mode: darken;
}

.vscroll {
    display: flex;
    flex-direction: column;
    width: 15px;
    background: linear-gradient(90deg, #a9c6ee, #7096c8 4px, #7ea3d6);
}

.vscroll .split {
    height: 8px;
    border: 1px solid #5f86b8;
    background: linear-gradient(#5f86b8, #5f86b8) no-repeat center / 7px 1px #fff;
}

.vscroll button {
    height: 17px;
    color: #2f4a78;
}

.vscroll .thumb {
    flex: 17 1 0;
    background: repeating-linear-gradient(#6a7f9c 0 1px, transparent 1px 2px) no-repeat center / 8px 7px, linear-gradient(90deg, #dfe7f0, #eef2f7 40%, #b4cadd);
    border: 1px solid #4a6696;
    border-radius: 2px;
}

.vscroll .down {
    flex: 4 1 0;
    align-items: flex-end;
    padding-bottom: 6px;
}

/* sheet tabs */
.sheetbar {
    display: flex;
    height: 16px;
    background-color: #8fb0dc;
    border-top: 1px solid #e4eefa;
    border-bottom: 1px solid #5f7ba6;
}

.nav {
    display: flex;
    width: 58px;
    background-color: #bfd6f6;
}

.nav button {
    flex: 1;
}

.sheets {
    display: flex;
    flex: 1;
    min-width: 0;
    overflow: hidden;
    font-size: 12px;
}

.sheets a {
    flex: none;
    margin-right: -12px;
    padding: 1px;
    background-color: #fff;
    clip-path: polygon(12px 0, 100% 0, calc(100% - 12px) 100%, 0 100%);
}

.sheets span {
    display: block;
    height: 13px;
    padding: 0 15px;
    line-height: 13px;
    clip-path: polygon(12px 0, 100% 0, calc(100% - 12px) 100%, 0 100%);
}

.plain span { padding: 0 13px; background: linear-gradient(#dce9fb, #bcd4f6); color: #1f4a94; }
.black span { padding: 0 14px; background: linear-gradient(#666, #555 45%, #000 50%, #444); color: #fff; }
.orange span { background: linear-gradient(#fde08a, #fdd050 45%, #f9b820 50%, #fdd870); color: #000; }
.cream span { padding: 0 17px; background: linear-gradient(#ffffd8, #ffffb0 50%, #ffffd0); color: #000; }
.yellow span { background: linear-gradient(#ffff9c, #ffff60 45%, #ffff10 50%, #ffff80); color: #000; }
.red span { background: linear-gradient(#ff8080, #ff6060 45%, #f01010 50%, #ff6060); color: #fff; }
.teal span { background: linear-gradient(#93ccb4, #7cc0a2 45%, #389c70 50%, #80c4a8); color: #fff; }

.sheets .current {
    padding: 0;
    clip-path: polygon(12px 0, 100% 0, calc(100% - 12px) 100%, 12px 100%);
    z-index: 1;
}

.current span {
    height: 15px;
    padding: 0 13px 0 17px;
    background-color: #fff;
    color: #000;
    font-weight: bold;
    line-height: 15px;
}

.hscroll {
    display: flex;
    width: 127px;
    padding-right: 16px;
    background-color: #7a9fd2;
}

.hscroll .grip {
    width: 6px;
    border: 2px solid #fff;
    background-color: #5f86b8;
}

.hscroll button {
    width: 17px;
}

.hscroll .thumb {
    flex: 1;
    margin-right: 9px;
    background: repeating-linear-gradient(90deg, #6a7f9c 0 1px, transparent 1px 2px) no-repeat center / 8px 7px, linear-gradient(#eef2f7, #b9cbe0);
    border: 1px solid #4a6696;
    border-radius: 2px;
}

/* status bar */
.status {
    display: flex;
    align-items: stretch;
    justify-content: space-between;
    height: 23px;
    background: linear-gradient(#fff 0, #fff 1px, #d4e4fa 2px, #c3d8f6 9px, #adcaf3 10px, #cfe2fb 100%);
    border-bottom: 1px solid #3f5878;
}

.mode {
    width: 47px;
    padding-left: 7px;
    border-right: 1px solid #8fb0dc;
    line-height: 22px;
}

.zoom {
    display: flex;
    align-items: center;
    width: 245px;
    padding: 0 5px;
    background: linear-gradient(#b9d2f4, #86aae0 50%, #a9c8f2);
    border-left: 1px solid #5f86b8;
}

.views {
    display: flex;
    height: 18px;
    border: 1px solid #8a94a4;
    border-radius: 2px;
    background: linear-gradient(#f4f4f2, #d4d6d8);
}

.views button {
    width: 18px;
}

.pct {
    width: 44px;
    padding-left: 8px;
    color: #66799a;
}

.track {
    flex: 1;
    height: 8px;
    background: linear-gradient(#fff, #fff) no-repeat center / 1px 8px, linear-gradient(#fff, #dbe8fa) no-repeat center / 100% 1px;
}

/* taskbar */
.taskbar {
    display: flex;
    height: 39px;
    padding-left: 8px;
    background: linear-gradient(90deg, #71879f 0, #8299b4 50px, #a5bedb 80px, #a5bedb calc(100% - 290px), #8094ad calc(100% - 255px), #8094ad 100%);
    border-top: 1px solid #c4d6ea;
}

.start {
    width: 36px;
    margin-right: 15px;
}

.app {
    width: 59px;
    margin-right: 3px;
}

.app.open {
    border: 1px solid #46586e;
    border-radius: 3px;
    background: linear-gradient(135deg, #dce8f5, #a9bfda 50%, #c5d6ea);
    box-shadow: inset 0 0 0 1px #eef5fc;
}

.app.excel {
    background: linear-gradient(135deg, #eaf4ec, #b4cfc0 50%, #d3e4da);
}

.tray {
    display: flex;
    align-items: center;
    gap: 8px;
    margin-left: auto;
    color: #fff;
}

.lang {
    width: 26px;
    padding-bottom: 4px;
}

.clock {
    width: 76px;
    padding-left: 2px;
    font-size: 12px;
    text-align: center;
    line-height: 17px;
}

.desktop {
    width: 14px;
    margin-left: 4px;
    border: 1px solid #46586e;
    background: linear-gradient(135deg, #b4c2d2, #5f728a);
}

/* red highlight boxes over the window */
.mark {
    position: absolute;
    z-index: 5;
    border: 5px solid #e81c24;
    pointer-events: none;
}

.mark-formula {
    left: 230px;
    top: 132px;
    width: 104px;
    height: 39px;
}

.mark-row {
    left: 1px;
    top: 561px;
    width: 631px;
    height: 38px;
}
```
